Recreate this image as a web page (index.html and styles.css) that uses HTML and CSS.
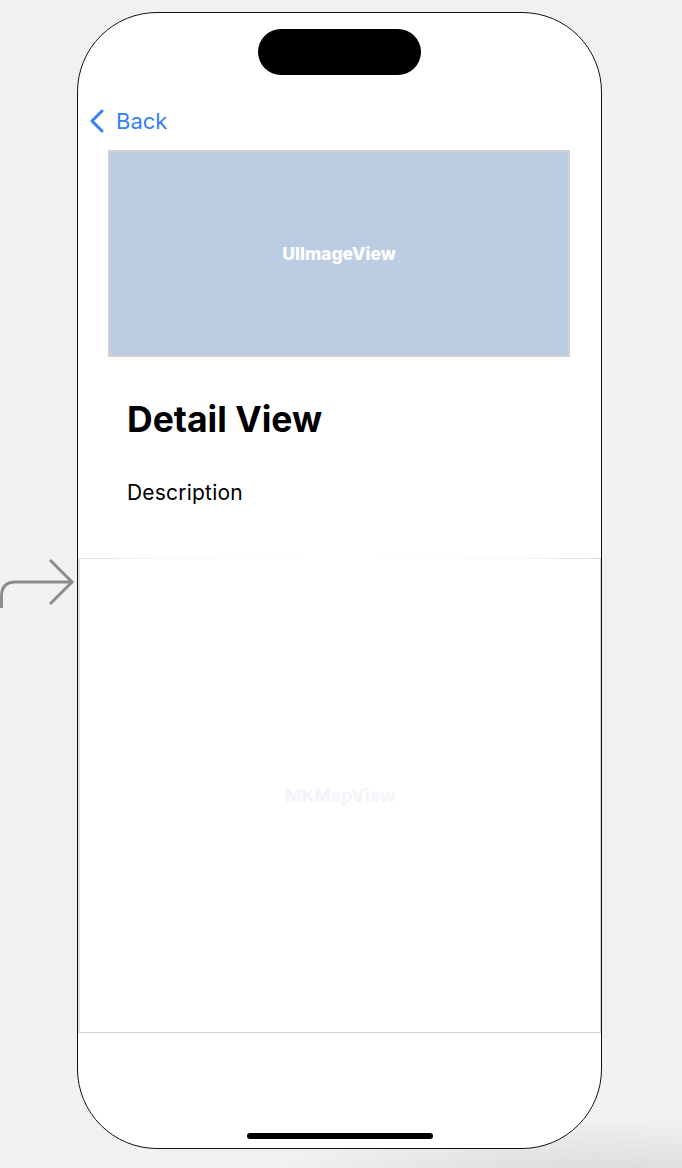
FILE: index.html
```html
<!DOCTYPE html>
<html>
<head>
    <title>Detail View</title>
    <link rel="stylesheet" href="styles.css">
</head>
<body>
    <!-- Storyboard entry point -->
    <svg class="entry-arrow" width="77" height="52" viewBox="0 0 77 52">
        <path d="M1.5 52 V40 Q1.5 26 15.5 26 H72" fill="none" stroke="#8c8c8c" stroke-width="3"/>
        <path d="M50 4 L72 26 L50 48" fill="none" stroke="#8c8c8c" stroke-width="3"/>
    </svg>

    <div class="phone">
        <div class="island"></div>

        <div class="nav">
            <svg class="back-chevron" width="16" height="24" viewBox="0 0 16 24">
                <path d="M13 2 L3 12 L13 22" fill="none" stroke="#3580f5" stroke-width="3" stroke-linecap="round" stroke-linejoin="round"/>
            </svg>
            <span class="back-label">Back</span>
        </div>

        <div class="image-view">UIImageView</div>

        <h1 class="title">Detail View</h1>
        <p class="description">Description</p>

        <div class="map-view">MKMapView</div>

        <div class="home-indicator"></div>
    </div>
</body>
</html>
```

FILE: styles.css
```css
html, body {
    height: 100%;
}
body {
    margin: 0;
    padding: 12px 0 0 0;
    box-sizing: border-box;
    display: flex;
    align-items: flex-start;
    font-family: Inter, "Liberation Sans", sans-serif;
    background:
        radial-gradient(ellipse 340px 70px at 600px 1188px, #d6d6d6, rgba(241, 241, 241, 0) 100%),
        #f1f1f1;
    overflow: hidden;
}
.entry-arrow {
    display: block;
    flex: none;
    margin-top: 544px;
}
.phone {
    flex: none;
    width: 525px;
    height: 1137px;
    box-sizing: border-box;
    border: 1px solid #111;
    border-radius: 80px;
    background: #fff;
    overflow: hidden;
    display: flex;
    flex-direction: column;
    align-items: stretch;
}
.island {
    width: 163px;
    height: 46px;
    margin: 16px auto 0;
    border-radius: 23px;
    background: #000;
}
.nav {
    display: flex;
    align-items: center;
    margin-top: 33px;
    padding-left: 11px;
    height: 26px;
}
.back-chevron {
    display: block;
}
.back-label {
    margin-left: 11px;
    font-size: 22px;
    line-height: 26px;
    color: #3580f5;
}
.image-view {
    margin: 16px 31px 0 30px;
    height: 207px;
    box-sizing: border-box;
    border: 2px solid #d2d2d2;
    background: #bccde3;
    display: flex;
    align-items: center;
    justify-content: center;
    color: #fff;
    font-weight: 800;
    font-size: 17.5px;
}
.title {
    margin: 40px 0 0 49px;
    font-size: 35.5px;
    line-height: 45px;
    font-weight: 700;
    color: #000;
}
.description {
    margin: 39px 0 0 49px;
    font-size: 21px;
    line-height: 24px;
    letter-spacing: 0.2px;
    color: #000;
}
.map-view {
    margin: 53px 0 0 0;
    height: 475px;
    box-sizing: border-box;
    border-left: 2px solid #dfe5ee;
    border-right: 1px solid #d4d4d4;
    border-bottom: 1px solid #d0d0d0;
    background:
        linear-gradient(to right, #e0e0e0, #f6f6f6 15%, #ffffff 50%, #f6f6f6 85%, #dcdcdc) top / 100% 1px no-repeat,
        #fff;
    display: flex;
    align-items: center;
    justify-content: center;
    color: #f3f5f9;
    font-weight: 800;
    font-size: 17.5px;
}
.home-indicator {
    width: 186px;
    height: 6px;
    margin: 100px auto 0;
    border-radius: 3px;
    background: #000;
}
```
